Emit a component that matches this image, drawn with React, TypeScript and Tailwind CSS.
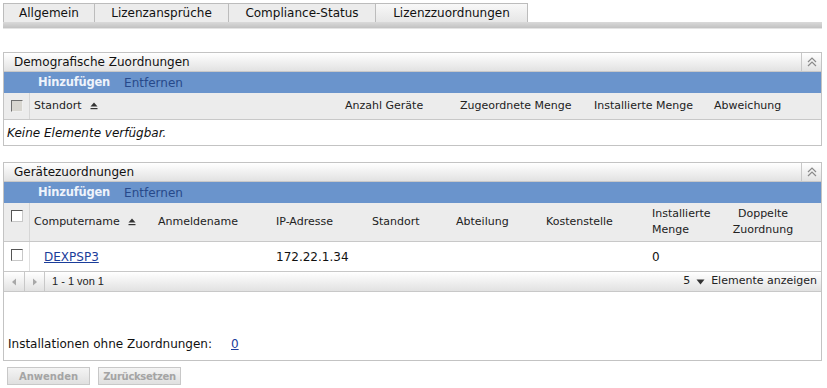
import React from "react";

const tabs = ["Allgemein", "Lizenzansprüche", "Compliance-Status", "Lizenzzuordnungen"];
const tabWidths = ["w-[92px]", "w-[134px]", "w-[147px]", "w-[152px]"];

const CollapseIcon = () => (
  <svg width="12" height="12" viewBox="0 0 12 12" fill="none" stroke="#8a8a8a" strokeWidth="1.2">
    <path d="M2 6 L6 2 L10 6" />
    <path d="M2 10 L6 6 L10 10" />
  </svg>
);

const SortIcon = () => (
  <svg width="8" height="8" viewBox="0 0 8 8" className="inline-block ml-[8px]">
    <path d="M4 0.5 L7.5 4.5 L0.5 4.5 Z" fill="#333" />
    <rect x="0.5" y="6" width="7" height="1.2" fill="#333" />
  </svg>
);

const Checkbox = ({ disabled }: { disabled?: boolean }) => (
  <div
    className={`w-[12px] h-[12px] border ${
      disabled
        ? "bg-[#d8d6d0] border-t-[#6f6f6f] border-l-[#6f6f6f] border-r-[#f0f0f0] border-b-[#f0f0f0]"
        : "bg-white border-t-[#555] border-l-[#555] border-r-[#c8c8c8] border-b-[#c8c8c8]"
    }`}
  />
);

const PanelHeader = ({ title }: { title: string }) => (
  <>
    <div className="h-[19px] flex items-center bg-gradient-to-b from-white to-[#e2e2e2] border-b border-[#c8c8c8]">
      <div className="flex-1 pl-[10px] text-[12px] text-[#111]">{title}</div>
      <div className="w-[20px] h-full flex items-center justify-center border-l border-[#c8c8c8]">
        <CollapseIcon />
      </div>
    </div>
    <div className="h-[21px] bg-[#6a94cc] flex items-center pl-[34px] gap-[14px]">
      <span className="text-[11.5px] font-bold text-[#eef3fb] tracking-[-0.2px]">Hinzufügen</span>
      <span className="text-[12px] text-[#27498a]">Entfernen</span>
    </div>
  </>
);

export default function App() {
  return (
    <div className="w-[827px] h-[388px] bg-white overflow-hidden font-['DejaVu_Sans',sans-serif] text-[12px] text-[#111]">
      {/* Tabs */}
      <div className="pt-[3px] pl-[3px] pr-[5px]">
        <div className="flex h-[19px]">
          {tabs.map((t, i) => (
            <div
              key={t}
              className={`${tabWidths[i]} flex items-center justify-center border-t border-r border-[#bcbcbc] ${
                i === 0 ? "border-l" : ""
              } ${i === 3 ? "bg-gradient-to-b from-[#f8f8f8] to-[#e6e6e6]" : "bg-[#ececec]"}`}
            >
              <span className="text-[12px] text-[#111]">{t}</span>
            </div>
          ))}
        </div>
        <div className="h-[7px] bg-gradient-to-b from-[#dadada] to-[#c2c2c2] border-b border-[#e4e4e4]" />
      </div>

      {/* Demografische Zuordnungen */}
      <div className="mt-[23px] mx-[3px] w-[819px] border border-[#c3c3c3]">
        <PanelHeader title="Demografische Zuordnungen" />
        <div className="h-[27px] flex bg-[#ececec] border-b border-[#c8c8c8] text-[11px] text-[#222]">
          <div className="w-[26px] flex items-center justify-center pl-[1px] border-r border-[#d6d6d6]">
            <Checkbox disabled />
          </div>
          <div className="w-[311px] flex items-center pl-[4px]">
            Standort
            <SortIcon />
          </div>
          <div className="w-[115px] flex items-center pl-[4px]">Anzahl Geräte</div>
          <div className="w-[134px] flex items-center pl-[4px]">Zugeordnete Menge</div>
          <div className="w-[120px] flex items-center pl-[4px]">Installierte Menge</div>
          <div className="flex-1 flex items-center pl-[4px]">Abweichung</div>
        </div>
        <div className="h-[25px] flex items-center pl-[3px] italic text-[12px]">Keine Elemente verfügbar.</div>
      </div>

      {/* Gerätezuordnungen */}
      <div className="mt-[16px] mx-[3px] w-[819px] h-[199px] border border-[#c3c3c3] flex flex-col">
        <PanelHeader title="Gerätezuordnungen" />
        <div className="h-[39px] flex bg-[#ececec] border-b border-[#c8c8c8] text-[11px] text-[#222]">
          <div className="w-[26px] flex justify-center pt-[7px] pl-[1px] border-r border-[#d6d6d6]">
            <Checkbox />
          </div>
          <div className="w-[124px] flex items-center pl-[4px]">
            Computername
            <SortIcon />
          </div>
          <div className="w-[118px] flex items-center pl-[4px]">Anmeldename</div>
          <div className="w-[96px] flex items-center pl-[4px]">IP-Adresse</div>
          <div className="w-[84px] flex items-center pl-[4px]">Standort</div>
          <div className="w-[90px] flex items-center pl-[4px]">Abteilung</div>
          <div className="w-[106px] flex items-center pl-[4px]">Kostenstelle</div>
          <div className="w-[80px] flex items-center pl-[4px] leading-[16px]">
            Installierte
            <br />
            Menge
          </div>
          <div className="w-[70px] flex items-center justify-center text-center leading-[16px]">
            Doppelte
            <br />
            Zuordnung
          </div>
        </div>
        <div className="h-[30px] flex border-b border-[#c8c8c8] text-[12px]">
          <div className="w-[26px] flex justify-center pt-[7px] pl-[1px] border-r border-[#e0e0e0]">
            <Checkbox />
          </div>
          <div className="w-[124px] flex items-center pl-[14px]">
            <a className="text-[#1a3d9a] underline">DEXPSP3</a>
          </div>
          <div className="w-[118px]" />
          <div className="w-[96px] flex items-center pl-[4px]">172.22.1.34</div>
          <div className="w-[84px]" />
          <div className="w-[90px]" />
          <div className="w-[106px]" />
          <div className="w-[80px] flex items-center pl-[4px]">0</div>
        </div>
        <div className="h-[20px] flex items-center bg-gradient-to-b from-white to-[#e2e2e2] border-b border-[#c8c8c8]">
          <div className="w-[21px] h-full flex items-center justify-center border-r border-[#c8c8c8]">
            <svg width="6" height="8" viewBox="0 0 6 8">
              <path d="M5 0.5 L1 4 L5 7.5 Z" fill="#a8a8a8" />
            </svg>
          </div>
          <div className="w-[20px] h-full flex items-center justify-center border-r border-[#c8c8c8]">
            <svg width="6" height="8" viewBox="0 0 6 8">
              <path d="M1 0.5 L5 4 L1 7.5 Z" fill="#a8a8a8" />
            </svg>
          </div>
          <div className="flex-1 pl-[7px] text-[11px] font-['Liberation_Sans',sans-serif] text-[#222]">1 - 1 von 1</div>
          <div className="flex items-center pr-[4px] text-[11px] text-[#222]">
            5
            <svg width="9" height="6" viewBox="0 0 9 6" className="mx-[6px]">
              <path d="M0.5 0.5 L8.5 0.5 L4.5 5.5 Z" fill="#333" />
            </svg>
            Elemente anzeigen
          </div>
        </div>
        <div className="flex-1 flex items-end pb-[7px] pl-[4px] text-[12px]">
          <span>Installationen ohne Zuordnungen:</span>
          <a className="ml-[19px] text-[#1a3d9a] underline">0</a>
        </div>
      </div>

      {/* Buttons */}
      <div className="flex gap-[8px] pl-[7px] mt-[6px]">
        <button className="w-[83px] h-[18px] border border-[#c8c8c8] bg-gradient-to-b from-[#f4f4f4] to-[#e0e0e0] text-[10px] font-bold text-[#a4a4a4]">
          Anwenden
        </button>
        <button className="w-[83px] h-[18px] border border-[#c8c8c8] bg-gradient-to-b from-[#f4f4f4] to-[#e0e0e0] text-[10px] font-bold tracking-[-0.3px] text-[#a4a4a4]">
          Zurücksetzen
        </button>
      </div>
    </div>
  );
}
